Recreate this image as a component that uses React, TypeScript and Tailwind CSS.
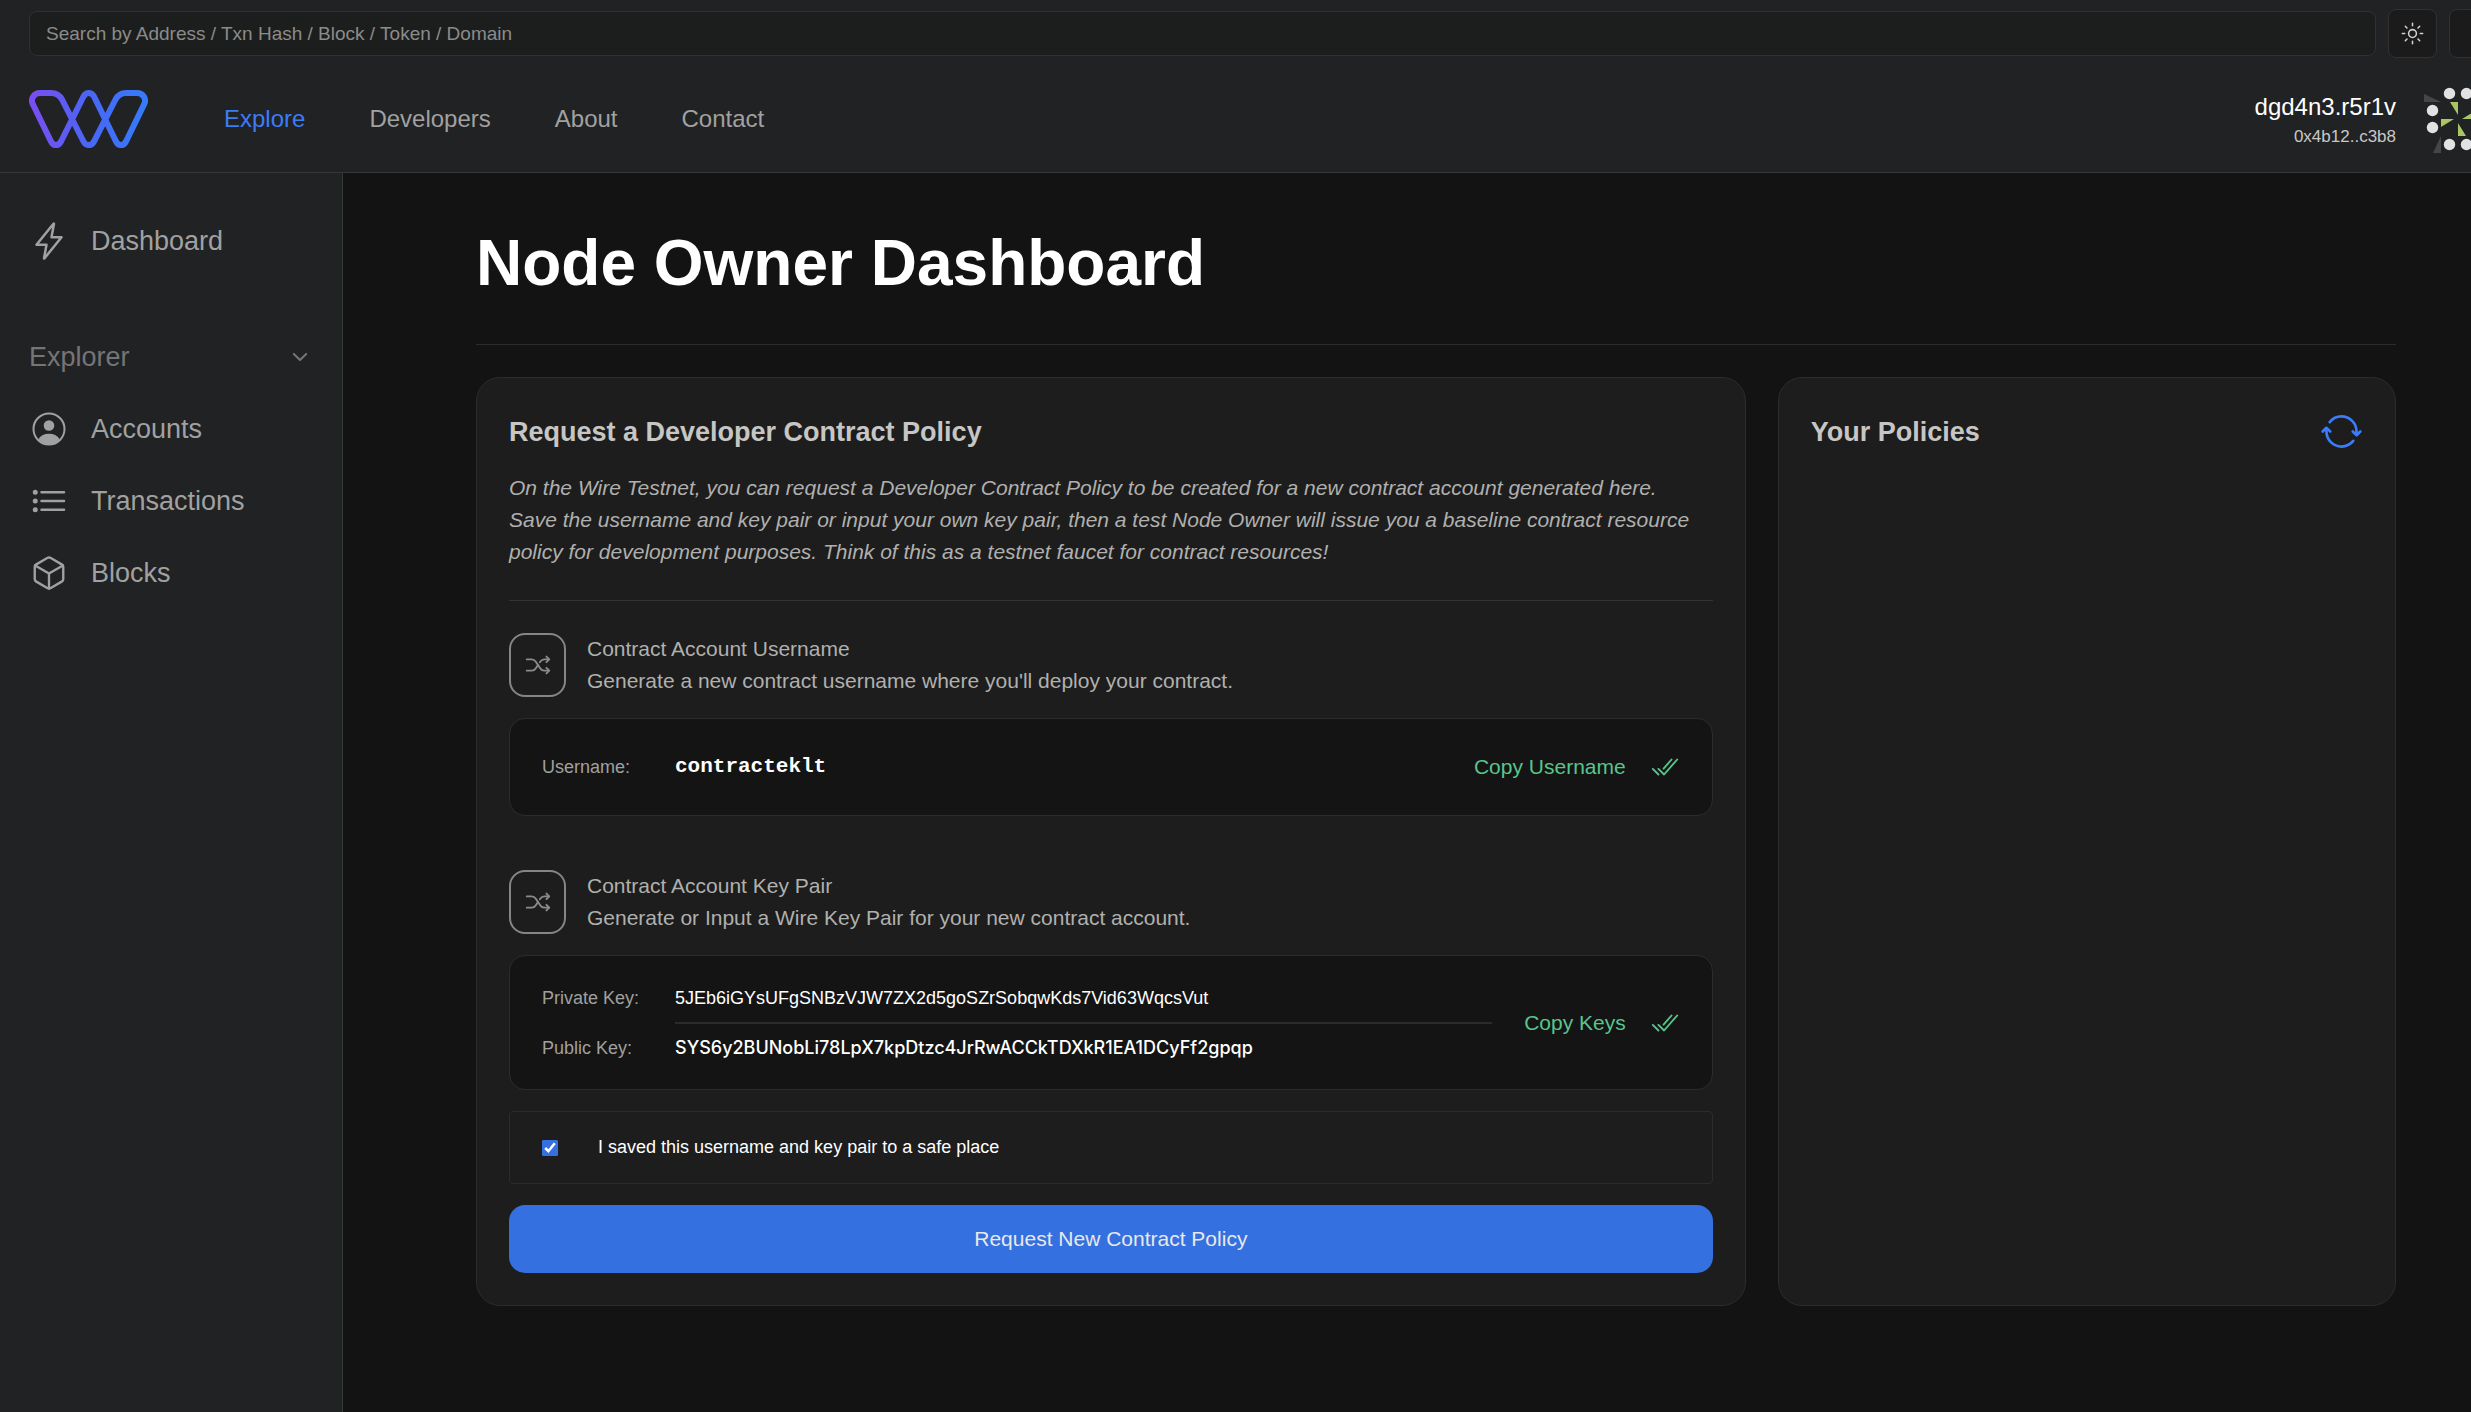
import React, { useState } from 'react';
import type { ReactNode } from 'react';
import {
  IoCheckmarkDoneOutline,
  IoChevronDownOutline,
  IoCubeOutline,
  IoFlashOutline,
  IoListOutline,
  IoShuffleOutline,
  IoSunnyOutline,
  IoSyncOutline,
} from 'react-icons/io5';

const NAV = ['Developers', 'About', 'Contact'];

function Logo() {
  return (
    <svg width="119" height="58" viewBox="0 0 119 58" fill="none" aria-label="Wire">
      <defs>
        <linearGradient id="wire" x1="0" y1="0" x2="119" y2="0" gradientUnits="userSpaceOnUse">
          <stop offset="0" stopColor="#7c4df0" />
          <stop offset="0.5" stopColor="#4a66f5" />
          <stop offset="1" stopColor="#347cfb" />
        </linearGradient>
      </defs>
      <path
        stroke="url(#wire)"
        strokeWidth="6"
        strokeLinejoin="round"
        d="M11 3H22C27 3 30.500 5 33 9.500L54.500 51.500C57 56.200 62.500 56.200 65 51.500L86.500 9.500C89 5 92 3 97 3H108C114 3 118 9 115 14.500L97 51.500C94.500 56.200 89.500 56.200 87 51.500L65 6.500C62.500 1.800 57 1.800 54.500 6.500L32 51.500C29.500 56.200 24.500 56.200 22 51.500L4 14.500C1 9 5 3 11 3Z"
      />
    </svg>
  );
}

const DOTS = [
  [25.5, 8.5], [42.5, 8.5], [8.5, 25.5], [8.5, 42.5],
  [25.5, 59.5], [42.5, 59.5], [59.5, 25.5], [59.5, 42.5],
];

function Identicon() {
  return (
    <svg width="68" height="68" viewBox="0 0 68 68" aria-hidden="true">
      <g fill="#e2e2e2">
        {DOTS.map(([x, y]) => (
          <circle key={`${x}-${y}`} cx={x} cy={y} r="5.700" />
        ))}
      </g>
      <path fill="#aac561" d="M26 17H34V30ZM51 26V34H38ZM42 51H34V38ZM17 42V34H30Z" />
      <path fill="#464646" d="M0 9L17 17H0ZM17 51V68H9Z" />
    </svg>
  );
}

function AccountIcon() {
  return (
    <svg width="40" height="40" viewBox="0 0 40 40" fill="none" aria-hidden="true">
      <circle cx="20" cy="20" r="15.500" stroke="currentColor" strokeWidth="2" />
      <circle cx="20" cy="16.500" r="5.300" fill="currentColor" />
      <path fill="currentColor" d="M9.500 30C11.500 26.500 15.500 24.700 20 24.700S28.500 26.500 30.500 30C28 33.500 24 35.500 20 35.500S12 33.500 9.500 30Z" />
    </svg>
  );
}

function SideLink({ icon, label }: { icon: ReactNode; label: string }) {
  return (
    <a href="#" className="flex h-[72px] items-center text-[#a0a1a0]">
      <span className="flex w-10 justify-center">{icon}</span>
      <span className="ml-[22px] text-[27px]">{label}</span>
    </a>
  );
}

function Step({ title, text }: { title: string; text: string }) {
  return (
    <div className="flex items-center gap-[21px]">
      <button aria-label={`Generate: ${title}`} className="flex h-16 w-[57px] shrink-0 items-center justify-center rounded-2xl border-2 border-[#858585] text-[#8b8b8b]">
        <IoShuffleOutline size={30} />
      </button>
      <div className="text-[21px] leading-8 text-[#b0b0ae]">
        <h3>{title}</h3>
        <p>{text}</p>
      </div>
    </div>
  );
}

function CopyButton({ label }: { label: string }) {
  return (
    <button className="flex shrink-0 items-center gap-6 text-[21px] text-[#58c58d]">
      {label}
      <IoCheckmarkDoneOutline size={30} />
    </button>
  );
}

export default function App() {
  const [saved, setSaved] = useState(true);
  return (
    <div className="flex min-h-screen flex-col overflow-x-hidden bg-[#131313] font-['Liberation_Sans',Arial,sans-serif] text-[#a5a5a5]">
      <header className="border-b border-[#363737] bg-[#212224]">
        <div className="ml-[29px] flex items-center gap-3 pt-[9px]">
          <input
            aria-label="Search"
            placeholder="Search by Address / Txn Hash / Block / Token / Domain"
            className="h-[45px] min-w-0 flex-1 rounded-lg border border-[#303130] bg-[#1c1e1d] px-4 text-[19px] placeholder:text-[#8b8b8b]"
          />
          <button aria-label="Toggle theme" className="flex h-[49px] w-[49px] shrink-0 items-center justify-center rounded-lg border border-[#303132] bg-[#1b1b1b] text-[#d0d0d0]">
            <IoSunnyOutline size={25} />
          </button>
          <button aria-label="More" className="-mr-[27px] h-[49px] w-[49px] shrink-0 rounded-lg border border-[#303132] bg-[#1b1b1b]" />
        </div>
        <div className="ml-[29px] flex h-[114px] items-center pt-2">
          <a href="#"><Logo /></a>
          <nav className="ml-[76px] flex gap-16 text-2xl text-[#a0a1a0]">
            <a href="#" className="text-[#3b7cf7]">Explore</a>
            {NAV.map((n) => (
              <a key={n} href="#">{n}</a>
            ))}
          </nav>
          <div className="ml-auto mr-7 pt-1 text-right">
            <div className="text-2xl leading-8 text-white">dgd4n3.r5r1v</div>
            <div className="text-[17px] leading-7 text-[#c8c8c8]">0x4b12..c3b8</div>
          </div>
          <div className="-mr-[21px] shrink-0"><Identicon /></div>
        </div>
      </header>

      <div className="flex flex-1">
        <aside className="w-[343px] shrink-0 border-r border-[#363737] bg-[#212224] pl-[29px] pt-8">
          <SideLink icon={<IoFlashOutline size={42} />} label="Dashboard" />
          <button className="mt-11 flex h-[72px] w-full items-center justify-between pr-[31px] text-[#747574]">
            <span className="text-[27px]">Explorer</span>
            <IoChevronDownOutline size={22} />
          </button>
          <SideLink icon={<AccountIcon />} label="Accounts" />
          <SideLink icon={<IoListOutline size={40} />} label="Transactions" />
          <SideLink icon={<IoCubeOutline size={38} />} label="Blocks" />
        </aside>

        <main className="min-w-0 flex-1 pl-[133px] pr-[75px] pt-[50px]">
          <h1 className="border-b border-[#2b2b2b] pb-[41px] text-[64px] font-bold leading-[80px] text-white">Node Owner Dashboard</h1>

          <div className="mt-8 grid grid-cols-[1269fr_618fr] gap-8">
            <section className="rounded-3xl border border-[#2c2c2c] bg-[#1d1d1d] px-8 pb-8 pt-9">
              <h2 className="text-[27px] font-bold leading-9 text-[#c6c6c4]">Request a Developer Contract Policy</h2>
              <p className="mt-[22px] border-b border-[#333] pb-8 text-[21px] italic leading-8 text-[#b0b0ae]">
                On the Wire Testnet, you can request a Developer Contract Policy to be created for a new contract account generated here.
                <br />
                Save the username and key pair or input your own key pair, then a test Node Owner will issue you a baseline contract resource
                <br />
                policy for development purposes. Think of this as a testnet faucet for contract resources!
              </p>

              <div className="mt-8">
                <Step title="Contract Account Username" text="Generate a new contract username where you'll deploy your contract." />
              </div>
              <div className="mt-[21px] flex h-[98px] items-center rounded-2xl border border-[#2c2c2c] bg-[#141414] px-8">
                <span className="w-[133px] text-[18px] text-[#a0a09f]">Username:</span>
                <span className="flex-1 font-['Liberation_Mono','Courier_New',monospace] text-[21px] font-bold text-white">contracteklt</span>
                <CopyButton label="Copy Username" />
              </div>

              <div className="mt-[54px]">
                <Step title="Contract Account Key Pair" text="Generate or Input a Wire Key Pair for your new contract account." />
              </div>
              <div className="mt-[21px] flex h-[135px] items-center gap-8 rounded-2xl border border-[#2c2c2c] bg-[#141414] px-8">
                <dl className="grid flex-1 grid-cols-[133px_1fr] text-[18px] leading-6">
                  <dt className="pb-3 text-[#a0a09f]">Private Key:</dt>
                  <dd className="border-b-2 border-[#2b2b2b] pb-3 text-white">5JEb6iGYsUFgSNBzVJW7ZX2d5goSZrSobqwKds7Vid63WqcsVut</dd>
                  <dt className="pt-3 text-[#a0a09f]">Public Key:</dt>
                  <dd className="pt-3 font-['Inter',sans-serif] font-medium text-white">SYS6y2BUNobLi78LpX7kpDtzc4JrRwACCkTDXkR1EA1DCyFf2gpqp</dd>
                </dl>
                <CopyButton label="Copy Keys" />
              </div>

              <label className="mt-[21px] flex h-[73px] items-center gap-10 rounded border border-[#2c2c2c] px-8 text-[18px] text-white">
                <input type="checkbox" checked={saved} onChange={(e) => setSaved(e.target.checked)} className="h-4 w-4 accent-[#3470df]" />
                I saved this username and key pair to a safe place
              </label>
              <button className="mt-[21px] h-[68px] w-full rounded-2xl bg-[#3470df] text-[21px] text-[#e8e8e8]">Request New Contract Policy</button>
            </section>

            <section className="rounded-3xl border border-[#2c2c2c] bg-[#1d1d1d] px-8 pt-8">
              <div className="flex items-center justify-between">
                <h2 className="text-[27px] font-bold leading-9 text-[#c6c6c4]">Your Policies</h2>
                <button aria-label="Refresh policies" className="text-[#3b7cf7]"><IoSyncOutline size={43} /></button>
              </div>
            </section>
          </div>
        </main>
      </div>
    </div>
  );
}
